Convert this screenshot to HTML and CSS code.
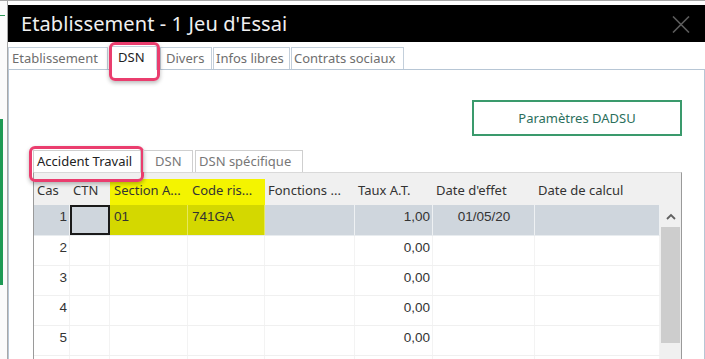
FILE: index.html
```html
<!DOCTYPE html>
<html lang="fr">
<head>
<meta charset="utf-8">
<title>Etablissement - 1 Jeu d'Essai</title>
<link rel="stylesheet" href="styles.css">
</head>
<body>
<div class="screen">
  <div class="bgstrip"><span class="g1"></span><span class="g2"></span></div>
  <div class="window">
    <div class="titlebar">
      <span class="title">Etablissement - 1 Jeu d'Essai</span>
      <svg class="close" width="18" height="17" viewBox="0 0 18 17"><path d="M1 0.5 L17 16.5 M17 0.5 L1 16.5" stroke="#5c5c5c" stroke-width="1.6" fill="none"/></svg>
    </div>
    <div class="tabs">
      <div class="tab t-etab">Etablissement</div>
      <div class="tab t-dsn active">DSN<span class="mark mark-dsn"></span></div>
      <div class="tab t-div">Divers</div>
      <div class="tab t-inf">Infos libres</div>
      <div class="tab t-con">Contrats sociaux</div>
    </div>
    <div class="panel">
      <div class="toolbar"><button class="btn">Paramètres DADSU</button></div>
      <div class="subtabs">
        <div class="stab s-acc active">Accident Travail<span class="mark mark-acc"></span></div>
        <div class="stab s-dsn">DSN</div>
        <div class="stab s-spe">DSN spécifique</div>
      </div>
      <div class="grid">
        <div class="head">
          <div class="hc">Cas</div>
          <div class="hc">CTN</div>
          <div class="hc hl">Section A...</div>
          <div class="hc hl">Code ris...</div>
          <div class="hc">Fonctions ...</div>
          <div class="hc">Taux A.T.</div>
          <div class="hc">Date d'effet</div>
          <div class="hc">Date de calcul</div>
          <div class="hc"></div>
        </div>
        <div class="body">
          <div class="rows">
            <div class="row sel">
              <div class="c num">1</div>
              <div class="c focus"></div>
              <div class="c yl">01</div>
              <div class="c yl">741GA</div>
              <div class="c"></div>
              <div class="c num">1,00</div>
              <div class="c ctr">01/05/20</div>
              <div class="c"></div>
            </div>
            <div class="row">
              <div class="c num">2</div><div class="c"></div><div class="c"></div><div class="c"></div><div class="c"></div><div class="c num">0,00</div><div class="c"></div><div class="c"></div>
            </div>
            <div class="row">
              <div class="c num">3</div><div class="c"></div><div class="c"></div><div class="c"></div><div class="c"></div><div class="c num">0,00</div><div class="c"></div><div class="c"></div>
            </div>
            <div class="row">
              <div class="c num">4</div><div class="c"></div><div class="c"></div><div class="c"></div><div class="c"></div><div class="c num">0,00</div><div class="c"></div><div class="c"></div>
            </div>
            <div class="row">
              <div class="c num">5</div><div class="c"></div><div class="c"></div><div class="c"></div><div class="c"></div><div class="c num">0,00</div><div class="c"></div><div class="c"></div>
            </div>
            <div class="row">
              <div class="c"></div><div class="c"></div><div class="c"></div><div class="c"></div><div class="c"></div><div class="c"></div><div class="c"></div><div class="c"></div>
            </div>
          </div>
          <div class="scrollbar">
            <div class="sb-up"><svg width="10" height="7" viewBox="0 0 10 7"><path d="M1 6 L5 2 L9 6" stroke="#606060" stroke-width="1.8" fill="none"/></svg></div>
            <div class="sb-thumb"></div>
            <div class="sb-track"></div>
          </div>
        </div>
      </div>
    </div>
  </div>
</div>
</body>
</html>
```

FILE: styles.css
```css
* { box-sizing: border-box; }
html, body { margin: 0; padding: 0; background: #ffffff; }
body { font-family: "Noto Sans", "Open Sans", sans-serif; color: #333; }

.screen {
  width: 705px;
  height: 359px;
  overflow: hidden;
  display: flex;
  border-top: 1px solid #a6a6a6;
}

.bgstrip {
  width: 7px;
  flex: none;
  position: relative;
  background: #fbfbfb;
}
.bgstrip .g1 { position: absolute; left: 0; top: 14px; width: 5px; height: 1px; background: #2f9a5a; }
.bgstrip .g2 { position: absolute; left: 0; top: 118px; width: 3px; height: 166px; background: #1f9a55; }

.window {
  flex: 1;
  border-left: 1px solid #a8a8a8;
  padding-top: 4px;
  display: flex;
  flex-direction: column;
}

.titlebar {
  height: 37px;
  flex: none;
  background: #000;
  display: flex;
  align-items: center;
  justify-content: space-between;
  padding: 0 15px 0 13px;
}
.title {
  color: #f0f0f0;
  font-size: 20px;
  letter-spacing: 0.1px;
}
.close { display: block; margin-top: 2px; }

.tabs {
  margin-top: 5px;
  height: 22px;
  flex: none;
  display: flex;
  align-items: flex-end;
}
.tab {
  position: relative;
  height: 22px;
  border: 1px solid #c3cfdb;
  border-bottom: none;
  font-size: 13px;
  color: #6e6e6e;
  line-height: 20px;
  padding: 0 3px;
  margin-right: 1px;
  background: #fff;
  white-space: nowrap;
}
.tab.active { color: #222; height: 24px; margin-bottom: -1px; border-color: #c3cfdb; z-index: 2; }
.t-etab { width: 100px; }
.t-dsn { width: 48px; padding-left: 8px; }
.t-div { width: 52px; margin-left: 2px; padding-left: 5px; }
.t-inf { width: 77px; padding-left: 2px; }
.t-con { width: 113px; padding-left: 2px; }

.mark {
  position: absolute;
  border: 3px solid #ea3d6e;
  border-radius: 6px;
  box-shadow: 0 2px 4px rgba(0,0,0,0.28);
  pointer-events: none;
}
.mark-dsn { left: -1px; top: -5px; width: 51px; height: 39px; }
.mark-acc { left: -5px; top: -5px; width: 115px; height: 36px; }

.panel {
  flex: 1;
  border: 1px solid #b7c6d5;
  border-bottom: none;
  padding: 30px 22px 0 24px;
  overflow: hidden;
}

.toolbar { display: flex; justify-content: flex-end; }
.btn {
  width: 210px;
  height: 36px;
  background: #fff;
  border: 2px solid #3a9a6c;
  color: #2b6f5c;
  font-family: "Noto Sans", "Open Sans", sans-serif;
  font-size: 13px;
  padding: 0;
}

.subtabs {
  margin-top: 14px;
  height: 22px;
  display: flex;
  align-items: flex-end;
}
.stab {
  position: relative;
  height: 22px;
  border: 1px solid #cfcfcf;
  border-bottom: none;
  font-size: 13px;
  color: #777;
  line-height: 20px;
  padding: 0 3px;
  margin-right: 2px;
  white-space: nowrap;
}
.stab.active { color: #222; }
.s-acc { width: 108px; }
.s-dsn { width: 50px; padding-left: 11px; }
.s-spe { width: 108px; }

.grid {
  width: 649px;
  border: 1px solid #9a9a9a;
  border-top: 1px solid #d9d9d9;
}
.head {
  display: grid;
  grid-template-columns: 36px 40px 78px 77px 90px 78px 102px 125px 21px;
  background: #f0f0f0;
  padding-top: 6px;
  height: 32px;
}
.hc {
  font-size: 13px;
  color: #333;
  line-height: 18px;
  padding: 2px 0 0 3px;
  white-space: nowrap;
  overflow: hidden;
}
.hc.hl { background: #f4f400; padding-left: 4px; }

.body { display: flex; }
.rows { width: 626px; }
.row {
  display: grid;
  grid-template-columns: 36px 40px 78px 77px 90px 78px 102px 125px;
  height: 30px;
  border-bottom: 1px solid #f0f0f0;
}
.row.sel { height: 31px; background: #cfd6dd; border-bottom: 1px solid #e8ecef; }
.c {
  font-family: "Liberation Sans", Arial, sans-serif;
  font-size: 13.5px;
  color: #333;
  line-height: 16px;
  padding: 4px 3px 0 4px;
  border-right: 1px solid #f3f3f3;
}
.row.sel .c { border-right: 1px solid #eef1f3; }
.c.num { text-align: right; padding-right: 2px; }
.c.ctr { text-align: center; }
.row.sel .c.yl { background: #d4d800; border-right: 1px solid #e6e85a; }
.row.sel .c.focus { border: 2px solid #1a1a1a; background: #cfd6dd; }

.scrollbar {
  width: 21px;
  display: flex;
  flex-direction: column;
  background: #f0f0f0;
}
.sb-up { height: 22px; display: flex; align-items: center; justify-content: center; }
.sb-thumb { height: 116px; background: #cdcdcd; margin: 0 1px; }
.sb-track { flex: 1; }
```
